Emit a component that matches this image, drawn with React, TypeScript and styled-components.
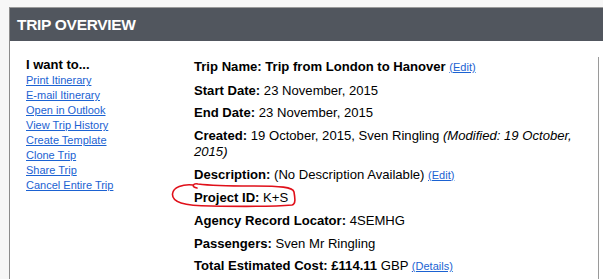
import React from "react";
import styled, { createGlobalStyle } from "styled-components";

const Global = createGlobalStyle`
  html, body { margin: 0; padding: 0; background: #f7f7f7; }
  body { font-family: Arial, "Liberation Sans", sans-serif; color: #000; }
`;

const Page = styled.div`
  padding: 7px 0 0 9px;
  height: 272px;
  overflow: hidden;
`;

const Panel = styled.div`
  border-top: 1px solid #9a9a9a;
  border-left: 1px solid #8c8c8c;
  background: #fff;
  width: 640px;
  height: 280px;
`;

const Header = styled.div`
  background: #51565e;
  height: 33px;
  display: flex;
  align-items: center;
  padding-left: 7px;
  color: #fff;
  font-weight: bold;
  font-size: 15.5px;
  letter-spacing: -0.3px;
`;

const Body = styled.div`
  display: flex;
  padding: 16px 0 0 16px;
`;

const Sidebar = styled.div`
  width: 168px;
  flex: none;
  display: flex;
  flex-direction: column;
`;

const SideTitle = styled.div`
  font-weight: bold;
  font-size: 13px;
  line-height: 15px;
  margin-bottom: 1px;
`;

const SideLink = styled.a`
  font-size: 11px;
  line-height: 15px;
  color: #1b62d2;
  text-decoration: underline;
  cursor: pointer;
`;

const Details = styled.div`
  position: relative;
  width: 382px;
  padding-top: 2px;
  padding-right: 22px;
  border-right: 1px solid #9a9a9a;
  font-size: 13.1px;
  line-height: 15.7px;
`;

const Row = styled.div`
  margin-bottom: 7px;
`;

const Label = styled.b`
  font-weight: bold;
`;

const Small = styled.a`
  font-size: 11px;
  color: #1b62d2;
  text-decoration: underline;
  cursor: pointer;
`;

const Scribble = styled.svg`
  position: absolute;
  left: -23px;
  top: 124px;
  pointer-events: none;
`;

export default function App() {
  const links = [
    "Print Itinerary",
    "E-mail Itinerary",
    "Open in Outlook",
    "View Trip History",
    "Create Template",
    "Clone Trip",
    "Share Trip",
    "Cancel Entire Trip",
  ];
  return (
    <>
      <Global />
      <Page>
        <Panel>
          <Header>TRIP OVERVIEW</Header>
          <Body>
            <Sidebar>
              <SideTitle>I want to...</SideTitle>
              {links.map((l) => (
                <SideLink key={l}>{l}</SideLink>
              ))}
            </Sidebar>
            <Details>
              <Row>
                <Label>Trip Name: Trip from London to Hanover</Label> <Small>(Edit)</Small>
              </Row>
              <Row>
                <Label>Start Date:</Label> 23 November, 2015
              </Row>
              <Row>
                <Label>End Date:</Label> 23 November, 2015
              </Row>
              <Row>
                <Label>Created:</Label> 19 October, 2015, Sven Ringling <i>(Modified: 19 October, 2015)</i>
              </Row>
              <Row>
                <Label>Description:</Label> (No Description Available) <Small>(Edit)</Small>
              </Row>
              <Row>
                <Label>Project ID:</Label> K+S
              </Row>
              <Row>
                <Label>Agency Record Locator:</Label> 4SEMHG
              </Row>
              <Row>
                <Label>Passengers:</Label> Sven Mr Ringling
              </Row>
              <Row>
                <Label>Total Estimated Cost:</Label> <Label>£114.11</Label> GBP <Small>(Details)</Small>
              </Row>
              <Scribble width="130" height="30" viewBox="0 0 130 30">
                <path
                  d="M22 4 C 12 3, 2 6, 1.5 13 C 1 21, 12 25, 40 25 C 70 25.5, 110 25, 121 24 C 125 23, 124 17, 123 11 C 122 6, 110 5, 80 5 C 55 5, 35 4, 27 3 C 22 2, 20 6, 26 7"
                  fill="none"
                  stroke="#e0101a"
                  strokeWidth="1.6"
                  strokeLinecap="round"
                />
              </Scribble>
            </Details>
          </Body>
        </Panel>
      </Page>
    </>
  );
}
